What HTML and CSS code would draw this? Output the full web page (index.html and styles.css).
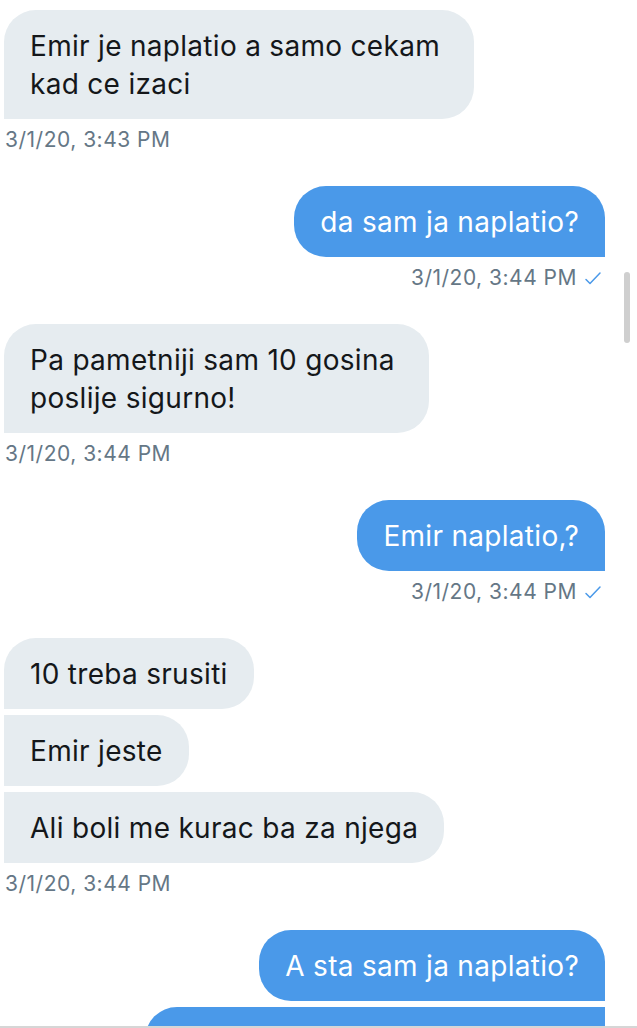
FILE: index.html
```html
<!DOCTYPE html>
<html lang="en">
  <head>
    <meta charset="UTF-8" />
    <meta name="viewport" content="width=device-width, initial-scale=1.0" />
    <title>Messages</title>
    <link rel="stylesheet" href="styles.css">
  </head>
  <body>
    <div class="thread">
      <div class="group in">
        <div class="bubble first last multi">Emir je naplatio a samo cekam<br />kad ce izaci</div>
        <div class="stamp">3/1/20, 3:43 PM</div>
      </div>

      <div class="group out">
        <div class="bubble first last">da sam ja naplatio?</div>
        <div class="stamp">
          3/1/20, 3:44 PM
          <svg class="check" viewBox="0 0 18 18" width="18" height="18">
            <polyline points="2,10.5 6,14.5 16,4" fill="none" stroke="#4a99e9" stroke-width="1.5" stroke-linecap="round" stroke-linejoin="round" />
          </svg>
        </div>
      </div>

      <div class="group in">
        <div class="bubble first last multi">Pa pametniji sam 10 gosina<br />poslije sigurno!</div>
        <div class="stamp">3/1/20, 3:44 PM</div>
      </div>

      <div class="group out">
        <div class="bubble first last">Emir naplatio,?</div>
        <div class="stamp">
          3/1/20, 3:44 PM
          <svg class="check" viewBox="0 0 18 18" width="18" height="18">
            <polyline points="2,10.5 6,14.5 16,4" fill="none" stroke="#4a99e9" stroke-width="1.5" stroke-linecap="round" stroke-linejoin="round" />
          </svg>
        </div>
      </div>

      <div class="group in">
        <div class="bubble first">10 treba srusiti</div>
        <div class="bubble">Emir jeste</div>
        <div class="bubble last">Ali boli me kurac ba za njega</div>
        <div class="stamp">3/1/20, 3:44 PM</div>
      </div>

      <div class="group out">
        <div class="bubble first">A sta sam ja naplatio?</div>
        <div class="bubble wide">&nbsp;</div>
      </div>
    </div>

    <div class="scrollbar"></div>
    <div class="bottom-line"></div>
  </body>
</html>
```

FILE: styles.css
```css
html,
body {
  margin: 0;
  padding: 0;
  background-color: #fff;
  overflow: hidden;
}

body {
  font-family: 'Inter', 'Liberation Sans', Arial, sans-serif;
  color: #14171a;
  height: 1028px;
}

.thread {
  display: flex;
  flex-direction: column;
  gap: 34px;
  padding: 10px 32px 0 4px;
}

.group {
  display: flex;
  flex-direction: column;
  gap: 6px;
}

.group.in {
  align-items: flex-start;
}

.group.out {
  align-items: flex-end;
}

.bubble {
  font-size: 28px;
  line-height: 38px;
  letter-spacing: 0.3px;
  padding: 16.5px 26px;
  border-radius: 32px;
  white-space: nowrap;
}

.bubble.multi {
  padding-right: 34px;
}

.in .bubble {
  background-color: #e6ecf0;
  border-top-left-radius: 0;
  border-bottom-left-radius: 0;
}

.in .bubble.first {
  border-top-left-radius: 32px;
}

.out .bubble {
  background-color: #4a99e9;
  color: #fff;
  border-top-right-radius: 0;
  border-bottom-right-radius: 0;
}

.out .bubble.first {
  border-top-right-radius: 32px;
}

.bubble.wide {
  width: 408px;
}

.stamp {
  display: flex;
  align-items: center;
  gap: 7px;
  margin-top: 3px;
  padding: 0 1px;
  font-size: 21px;
  line-height: 24px;
  letter-spacing: 0.5px;
  color: #657786;
}

.out .stamp {
  padding-right: 3px;
}

.check {
  display: block;
}

.scrollbar {
  position: fixed;
  top: 272px;
  right: 7px;
  width: 6px;
  height: 71px;
  border-radius: 3px;
  background-color: #cfcfcf;
}

.bottom-line {
  position: fixed;
  left: 0;
  right: 0;
  bottom: 0;
  height: 2px;
  background-color: #d6d6d6;
}
```
